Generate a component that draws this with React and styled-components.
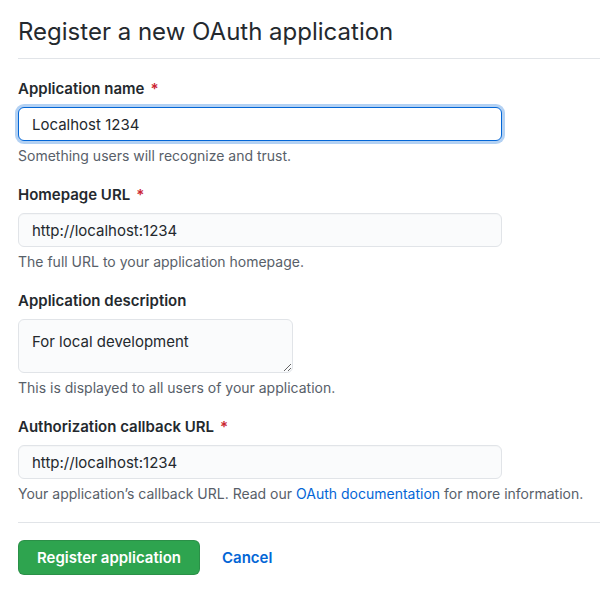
import React, { useState } from "react"
import styled, { createGlobalStyle } from "styled-components"

const GlobalStyle = createGlobalStyle`
    body {
        margin: 0;
        background: #ffffff;
        font-family: Inter, "Liberation Sans", Arial, sans-serif;
        color: #24292e;
        overflow: hidden;
    }
`;

const Page = styled.div`
    padding: 17px 0 0 18px;
`;

const Header = styled.div`
    border-bottom: 1px solid #e1e4e8;
    padding-bottom: 11px;
    margin-bottom: 20px;
    & h1 {
        margin: 0;
        font-size: 24px;
        font-weight: 400;
        line-height: 30px;
        color: #24292e;
    }
`;

const Group = styled.div`
    margin-bottom: 20px;
`;

const Label = styled.label`
    display: block;
    font-size: 15px;
    font-weight: 600;
    line-height: 20px;
    margin-bottom: 8px;
    & .required {
        color: #cb2431;
        margin-left: 6px;
    }
`;

const Field = styled.input`
    display: block;
    box-sizing: border-box;
    width: 484px;
    height: 34px;
    padding: 0 13px;
    font-family: inherit;
    font-size: 15px;
    color: #24292e;
    background: ${props => props.$focused ? "#ffffff" : "#fafbfc"};
    border: 1px solid ${props => props.$focused ? "#0366d6" : "#e1e4e8"};
    border-radius: 6px;
    box-shadow: ${props => props.$focused ? "0 0 0 3px rgba(3, 102, 214, 0.3)" : "inset 0 1px 0 rgba(225, 228, 232, 0.2)"};
    outline: none;
`;

const TextArea = styled.textarea`
    display: block;
    box-sizing: border-box;
    width: 275px;
    height: 54px;
    padding: 12px 13px 8px;
    font-family: inherit;
    font-size: 15px;
    line-height: 20px;
    color: #24292e;
    background: #fafbfc;
    border: 1px solid #e1e4e8;
    border-radius: 6px;
    outline: none;
    resize: both;
`;

const Note = styled.p`
    margin: 6px 0 0;
    font-size: 14px;
    line-height: 18px;
    color: #586069;
    white-space: nowrap;
    & a {
        color: #0366d6;
        text-decoration: none;
    }
`;

const Actions = styled.div`
    border-top: 1px solid #e1e4e8;
    margin-top: -1px;
    padding-top: 17px;
    display: flex;
    align-items: center;
    gap: 22px;
`;

const PrimaryButton = styled.button`
    box-sizing: border-box;
    height: 35px;
    padding: 0 18px;
    font-family: inherit;
    font-size: 15px;
    font-weight: 600;
    color: #ffffff;
    background: #2ea44f;
    border: 1px solid rgba(27, 31, 35, 0.15);
    border-radius: 6px;
    cursor: pointer;
`;

const CancelLink = styled.a`
    font-size: 15px;
    font-weight: 600;
    color: #0366d6;
    text-decoration: none;
`;

function Required() {
    return <span className='required'>*</span>;
}

function App() {
    const [form] = useState({
        name: "Localhost 1234",
        homepage: "http://localhost:1234",
        description: "For local development",
        callback: "http://localhost:1234"
    });

    return (
        <Page>
            <GlobalStyle />
            <Header>
                <h1>Register a new OAuth application</h1>
            </Header>
            <Group>
                <Label>Application name<Required /></Label>
                <Field $focused defaultValue={form.name} />
                <Note>Something users will recognize and trust.</Note>
            </Group>
            <Group>
                <Label>Homepage URL<Required /></Label>
                <Field defaultValue={form.homepage} />
                <Note>The full URL to your application homepage.</Note>
            </Group>
            <Group>
                <Label>Application description</Label>
                <TextArea defaultValue={form.description} />
                <Note>This is displayed to all users of your application.</Note>
            </Group>
            <Group>
                <Label>Authorization callback URL<Required /></Label>
                <Field defaultValue={form.callback} />
                <Note>
                    Your application’s callback URL. Read our <a href="#">OAuth documentation</a> for more information.
                </Note>
            </Group>
            <Actions>
                <PrimaryButton>Register application</PrimaryButton>
                <CancelLink href="#">Cancel</CancelLink>
            </Actions>
        </Page>
    );
}

export default App;
